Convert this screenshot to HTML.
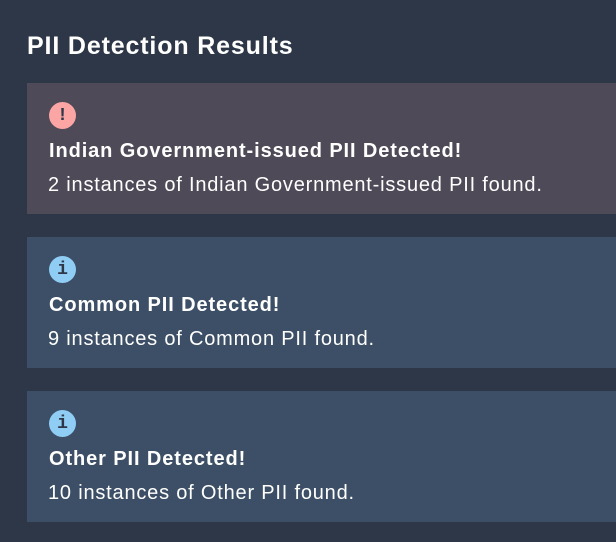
<html><head><style>
body{margin:0;background:#2d3748;font-family:"Liberation Sans",sans-serif;color:#fff;width:616px;height:542px;overflow:hidden;position:relative}
h1{position:absolute;left:27px;top:32px;margin:0;font-size:25px;font-weight:bold;letter-spacing:0.85px}
.c{position:absolute;left:27px;width:600px;height:131px}
.i{position:absolute;left:22px;top:19px;width:27px;height:27px;border-radius:50%;color:#2d3748;font-weight:bold;font-size:18px;text-align:center;line-height:29px;font-family:"Liberation Mono",monospace}
.t{position:absolute;left:22px;top:57px;font-size:20px;font-weight:bold;letter-spacing:0.9px}
.d{position:absolute;left:21px;top:91px;font-size:20px;letter-spacing:0.8px}
</style></head><body>
<h1>PII Detection Results</h1>
<div class="c" style="top:83px;background:#4f4a58"><div class="i" style="background:#fca5a5">!</div><div class="t">Indian Government-issued PII Detected!</div><div class="d">2 instances of Indian Government-issued PII found.</div></div>
<div class="c" style="top:237px;background:#3c4f66"><div class="i" style="background:#90cdf4">i</div><div class="t">Common PII Detected!</div><div class="d">9 instances of Common PII found.</div></div>
<div class="c" style="top:391px;background:#3c4f66"><div class="i" style="background:#90cdf4">i</div><div class="t">Other PII Detected!</div><div class="d">10 instances of Other PII found.</div></div>
</body></html>
